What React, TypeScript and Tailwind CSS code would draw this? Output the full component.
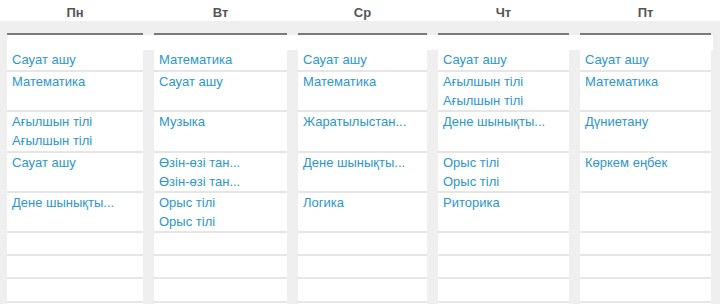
import React from "react";

type Day = {
  label: string;
  lessons: string[][];
};

const days: Day[] = [
  {
    label: "Пн",
    lessons: [["Сауат ашу"], ["Математика"], ["Ағылшын тілі", "Ағылшын тілі"], ["Сауат ашу"], ["Дене шынықты..."]],
  },
  {
    label: "Вт",
    lessons: [["Математика"], ["Сауат ашу"], ["Музыка"], ["Өзін-өзі тан...", "Өзін-өзі тан..."], ["Орыс тілі", "Орыс тілі"]],
  },
  {
    label: "Ср",
    lessons: [["Сауат ашу"], ["Математика"], ["Жаратылыстан..."], ["Дене шынықты..."], ["Логика"]],
  },
  {
    label: "Чт",
    lessons: [["Сауат ашу"], ["Ағылшын тілі", "Ағылшын тілі"], ["Дене шынықты..."], ["Орыс тілі", "Орыс тілі"], ["Риторика"]],
  },
  {
    label: "Пт",
    lessons: [["Сауат ашу"], ["Математика"], ["Дүниетану"], ["Көркем еңбек"], []],
  },
];

// row heights are shared across the days, so every column lines up
const rowHeights = [
  "h-[22px]",
  "h-[40px]",
  "h-[41px]",
  "h-[40px]",
  "h-[40px]",
  "h-[23px]",
  "h-[23px]",
  "h-[24px]",
  "h-[23px]",
];

const cols = "grid grid-cols-[136px_133px_129px_131px_131px] gap-x-[11px] pl-[7px]";

export default function App() {
  return (
    <div className="h-[304px] w-[720px] overflow-hidden bg-[#efefef] font-['Liberation_Sans',Arial,sans-serif] text-[13px]">
      <div className="bg-white">
        <div className={`${cols} h-[21px]`}>
          {days.map((day) => (
            <div key={day.label} className="pt-[4px] text-center font-bold leading-[17px] text-[#555555]">
              {day.label}
            </div>
          ))}
        </div>
      </div>

      <div className={`${cols} pt-[12px]`}>
        {days.map((day) => (
          <div key={day.label} className="h-[2px] bg-[#7a7a7a]" />
        ))}
      </div>

      <div className="ml-[7px] h-[15px] w-[706px] bg-white" />

      <div className={`${cols} items-start`}>
        {days.map((day) => (
          <div key={day.label} className="flex flex-col bg-white">
            {rowHeights.map((h, i) => (
              <div key={i} className={`${h} border-b-2 border-[#e6e6e6] pl-[5px] leading-[19px] text-[#2d96cd]`}>
                {(day.lessons[i] ?? []).map((name, j) => (
                  <div key={j} className="whitespace-nowrap">
                    {name}
                  </div>
                ))}
              </div>
            ))}
          </div>
        ))}
      </div>
    </div>
  );
}
